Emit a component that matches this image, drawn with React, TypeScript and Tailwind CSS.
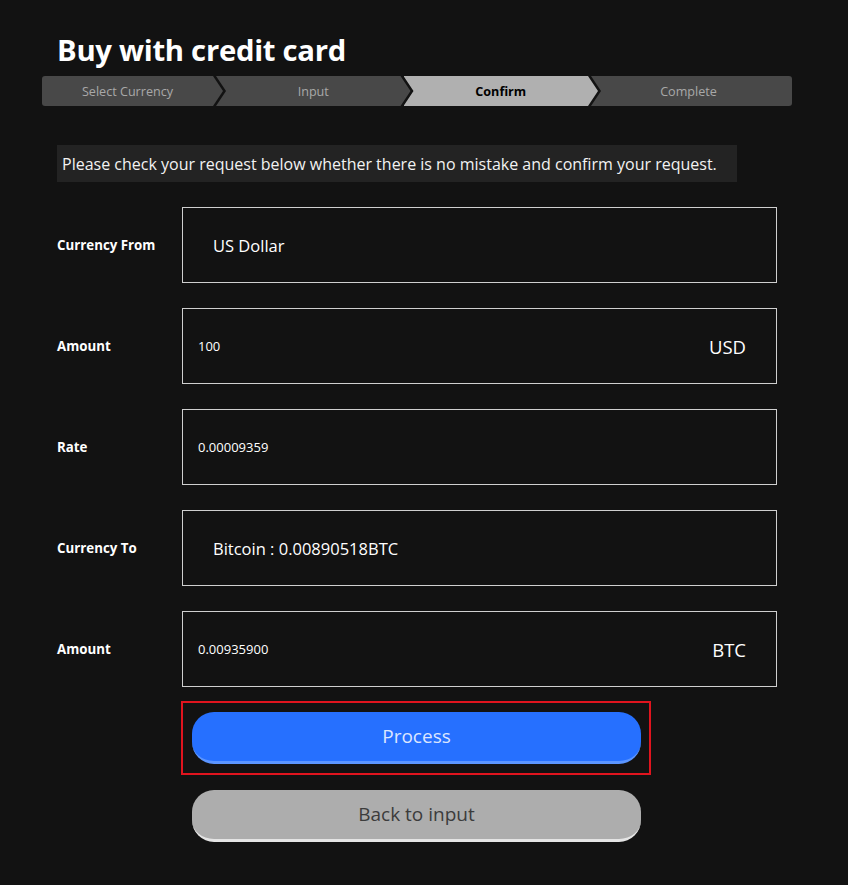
import React from 'react';

const steps = [
  { label: 'Select Currency', active: false, w: 'w-[181px]', pad: 'pr-[10px]' },
  { label: 'Input', active: false, w: 'w-[194.5px]', pad: 'pl-[10px] pr-[10px]' },
  { label: 'Confirm', active: true, w: 'w-[194.5px]', pad: 'pl-[10px] pr-[10px]' },
  { label: 'Complete', active: false, w: 'flex-1', pad: 'pl-[10px] pr-[16px]' },
];

const rows = [
  { label: 'Currency From', value: 'US Dollar', big: true },
  { label: 'Amount', value: '100', unit: 'USD' },
  { label: 'Rate', value: '0.00009359' },
  { label: 'Currency To', value: 'Bitcoin : 0.00890518BTC', big: true },
  { label: 'Amount', value: '0.00935900', unit: 'BTC' },
];

function StepBar() {
  return (
    <div className="flex h-[30px]">
      {steps.map((s, i) => {
        const first = i === 0;
        const last = i === steps.length - 1;
        const clip = first
          ? '[clip-path:polygon(0_0,calc(100%-10px)_0,100%_50%,calc(100%-10px)_100%,0_100%)] rounded-l-[3px]'
          : last
            ? '[clip-path:polygon(0_0,100%_0,100%_100%,0_100%,10px_50%)] rounded-r-[3px]'
            : '[clip-path:polygon(0_0,calc(100%-10px)_0,100%_50%,calc(100%-10px)_100%,0_100%,10px_50%)]';
        return (
          <div
            key={s.label}
            className={`flex shrink-0 items-center justify-center pt-[3px] text-[12.6px] ${s.w} ${s.pad} ${clip} ${
              first ? '' : '-ml-[7px]'
            } ${s.active ? 'bg-[#b0b0b0] font-bold text-black' : 'bg-[#484848] text-[#a8a8a8]'}`}
          >
            {s.label}
          </div>
        );
      })}
    </div>
  );
}

export default function App() {
  return (
    <div
      className="min-h-[885px] bg-[#121212] text-white"
      style={{ fontFamily: '"Open Sans", "Noto Sans", sans-serif' }}
    >
      <div className="ml-[42px] w-[750px] pt-[30px]">
        <h1 className="px-[15px] text-[29.3px] font-bold leading-[40px] tracking-[-0.3px]">
          Buy with credit card
        </h1>
        <div className="mt-[6px]">
          <StepBar />
        </div>

        <div className="px-[15px]">
          <div className="mt-[39px] flex h-[37px] w-[680px] items-center bg-[#232323] px-[5px] text-[16px] text-[#f2f2f2]">
            Please check your request below whether there is no mistake and confirm your request.
          </div>

          <div className="mt-[25px] flex flex-col gap-[25px]">
            {rows.map((r, i) => (
              <div key={i} className="flex items-center">
                <div className="w-[125px] pt-[2px] text-[13.3px] font-bold">{r.label}</div>
                <div
                  className={`flex h-[76px] flex-1 items-center justify-between border border-[#cfcfcf] pr-[30px] pt-[2px] ${
                    r.big ? 'pl-[30px] text-[16.5px]' : 'pl-[15px] text-[13px]'
                  }`}
                >
                  <span>{r.value}</span>
                  {r.unit && <span className="text-[18.5px]">{r.unit}</span>}
                </div>
              </div>
            ))}
          </div>

          <div className="ml-[124px] mt-[14px] w-[470px] border-2 border-[#e0141e] py-[9px] pl-[9px] pr-[8px]">
            <button className="flex h-[52px] w-full items-center justify-center rounded-[22px] border-b-[3px] border-[#5b95ff] bg-[#2670ff] text-[19px] text-[#dce6ff]">
              Process
            </button>
          </div>
          <div className="ml-[135px] mt-[15px] w-[449px]">
            <button className="flex h-[52px] w-full items-center justify-center rounded-[22px] border-b-[3px] border-[#e4e4e4] bg-[#adadad] text-[19px] text-[#3c3c3c]">
              Back to input
            </button>
          </div>
        </div>
      </div>
    </div>
  );
}
